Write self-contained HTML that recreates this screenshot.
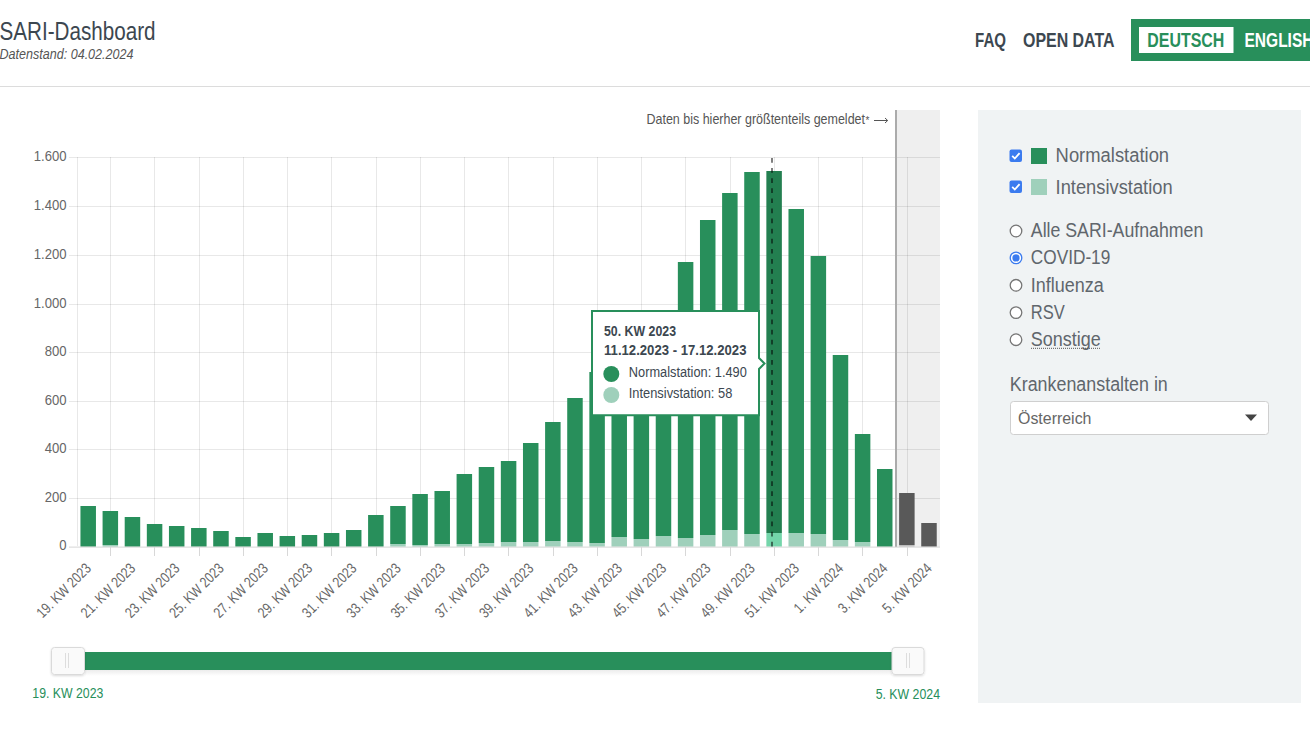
<!DOCTYPE html>
<html><head><meta charset="utf-8"><title>SARI-Dashboard</title>
<style>
html,body{margin:0;padding:0;background:#fff;width:1310px;height:737px;overflow:hidden}
svg{display:block}
text{font-family:"Liberation Sans",sans-serif}
</style></head><body>
<svg width="1310" height="737" viewBox="0 0 1310 737">
<defs><linearGradient id="bsh" x1="0" y1="0" x2="0" y2="1"><stop offset="0" stop-color="#ececec"/><stop offset="1" stop-color="#ffffff"/></linearGradient><filter id="sh" x="-30%" y="-30%" width="160%" height="160%"><feDropShadow dx="0" dy="1" stdDeviation="1" flood-color="#000" flood-opacity="0.15"/></filter></defs>
<text x="-0.50" y="39.60" font-size="25.73" fill="#3c4750" font-weight="normal" font-style="normal" text-anchor="start" textLength="156.00" lengthAdjust="spacingAndGlyphs" >SARI-Dashboard</text>
<text x="-0.50" y="59.00" font-size="14.68" fill="#555" font-weight="normal" font-style="italic" text-anchor="start" textLength="134.00" lengthAdjust="spacingAndGlyphs" >Datenstand: 04.02.2024</text>
<rect x="0" y="86" width="1310" height="1" fill="#dcdcdc" />
<text x="975.00" y="46.60" font-size="19.77" fill="#3c4750" font-weight="bold" font-style="normal" text-anchor="start" textLength="31.00" lengthAdjust="spacingAndGlyphs" >FAQ</text>
<text x="1023.00" y="46.60" font-size="19.77" fill="#3c4750" font-weight="bold" font-style="normal" text-anchor="start" textLength="91.50" lengthAdjust="spacingAndGlyphs" >OPEN DATA</text>
<rect x="1131" y="19" width="179" height="42" fill="#288f5b" />
<rect x="1139" y="27" width="94.5" height="26" fill="#fff" />
<text x="1147.30" y="46.50" font-size="19.77" fill="#288f5b" font-weight="bold" font-style="normal" text-anchor="start" textLength="77.00" lengthAdjust="spacingAndGlyphs" >DEUTSCH</text>
<text x="1244.50" y="46.50" font-size="19.77" fill="#fff" font-weight="bold" font-style="normal" text-anchor="start" textLength="69.00" lengthAdjust="spacingAndGlyphs" >ENGLISH</text>
<rect x="896" y="110" width="44" height="437" fill="#efefef" />
<rect x="69" y="157" width="871" height="1" fill="rgba(0,0,0,0.09)" />
<rect x="69" y="206" width="871" height="1" fill="rgba(0,0,0,0.09)" />
<rect x="69" y="255" width="871" height="1" fill="rgba(0,0,0,0.09)" />
<rect x="69" y="304" width="871" height="1" fill="rgba(0,0,0,0.09)" />
<rect x="69" y="352" width="871" height="1" fill="rgba(0,0,0,0.09)" />
<rect x="69" y="401" width="871" height="1" fill="rgba(0,0,0,0.09)" />
<rect x="69" y="449" width="871" height="1" fill="rgba(0,0,0,0.09)" />
<rect x="69" y="498" width="871" height="1" fill="rgba(0,0,0,0.09)" />
<rect x="77" y="157" width="1" height="389" fill="rgba(0,0,0,0.09)" />
<rect x="110" y="157" width="1" height="389" fill="rgba(0,0,0,0.09)" />
<rect x="110" y="547" width="1" height="9" fill="#d8d8d8" />
<rect x="154" y="157" width="1" height="389" fill="rgba(0,0,0,0.09)" />
<rect x="154" y="547" width="1" height="9" fill="#d8d8d8" />
<rect x="199" y="157" width="1" height="389" fill="rgba(0,0,0,0.09)" />
<rect x="199" y="547" width="1" height="9" fill="#d8d8d8" />
<rect x="243" y="157" width="1" height="389" fill="rgba(0,0,0,0.09)" />
<rect x="243" y="547" width="1" height="9" fill="#d8d8d8" />
<rect x="287" y="157" width="1" height="389" fill="rgba(0,0,0,0.09)" />
<rect x="287" y="547" width="1" height="9" fill="#d8d8d8" />
<rect x="331" y="157" width="1" height="389" fill="rgba(0,0,0,0.09)" />
<rect x="331" y="547" width="1" height="9" fill="#d8d8d8" />
<rect x="376" y="157" width="1" height="389" fill="rgba(0,0,0,0.09)" />
<rect x="376" y="547" width="1" height="9" fill="#d8d8d8" />
<rect x="420" y="157" width="1" height="389" fill="rgba(0,0,0,0.09)" />
<rect x="420" y="547" width="1" height="9" fill="#d8d8d8" />
<rect x="464" y="157" width="1" height="389" fill="rgba(0,0,0,0.09)" />
<rect x="464" y="547" width="1" height="9" fill="#d8d8d8" />
<rect x="508" y="157" width="1" height="389" fill="rgba(0,0,0,0.09)" />
<rect x="508" y="547" width="1" height="9" fill="#d8d8d8" />
<rect x="553" y="157" width="1" height="389" fill="rgba(0,0,0,0.09)" />
<rect x="553" y="547" width="1" height="9" fill="#d8d8d8" />
<rect x="597" y="157" width="1" height="389" fill="rgba(0,0,0,0.09)" />
<rect x="597" y="547" width="1" height="9" fill="#d8d8d8" />
<rect x="641" y="157" width="1" height="389" fill="rgba(0,0,0,0.09)" />
<rect x="641" y="547" width="1" height="9" fill="#d8d8d8" />
<rect x="685" y="157" width="1" height="389" fill="rgba(0,0,0,0.09)" />
<rect x="685" y="547" width="1" height="9" fill="#d8d8d8" />
<rect x="730" y="157" width="1" height="389" fill="rgba(0,0,0,0.09)" />
<rect x="730" y="547" width="1" height="9" fill="#d8d8d8" />
<rect x="774" y="157" width="1" height="389" fill="rgba(0,0,0,0.09)" />
<rect x="774" y="547" width="1" height="9" fill="#d8d8d8" />
<rect x="818" y="157" width="1" height="389" fill="rgba(0,0,0,0.09)" />
<rect x="818" y="547" width="1" height="9" fill="#d8d8d8" />
<rect x="862" y="157" width="1" height="389" fill="rgba(0,0,0,0.09)" />
<rect x="862" y="547" width="1" height="9" fill="#d8d8d8" />
<rect x="907" y="157" width="1" height="389" fill="rgba(0,0,0,0.09)" />
<rect x="907" y="547" width="1" height="9" fill="#d8d8d8" />
<rect x="895" y="110" width="2" height="437" fill="#ababab" />
<rect x="80.45" y="506" width="15.5" height="40.700000000000045" fill="#288f5b" />
<rect x="102.58" y="511" width="15.5" height="34" fill="#288f5b" />
<rect x="102.58" y="545" width="15.5" height="1.7000000000000455" fill="#9fd0bb" />
<rect x="124.7" y="517" width="15.5" height="29.700000000000045" fill="#288f5b" />
<rect x="146.83" y="524" width="15.5" height="22.700000000000045" fill="#288f5b" />
<rect x="168.95" y="526" width="15.5" height="20.700000000000045" fill="#288f5b" />
<rect x="191.08" y="528" width="15.5" height="18.700000000000045" fill="#288f5b" />
<rect x="213.21" y="531" width="15.5" height="15.700000000000045" fill="#288f5b" />
<rect x="235.33" y="537" width="15.5" height="9.700000000000045" fill="#288f5b" />
<rect x="257.46" y="533" width="15.5" height="13.700000000000045" fill="#288f5b" />
<rect x="279.58" y="536" width="15.5" height="10.700000000000045" fill="#288f5b" />
<rect x="301.71" y="535" width="15.5" height="11.700000000000045" fill="#288f5b" />
<rect x="323.84" y="533" width="15.5" height="13.700000000000045" fill="#288f5b" />
<rect x="345.96" y="530" width="15.5" height="16.700000000000045" fill="#288f5b" />
<rect x="368.09" y="515" width="15.5" height="31.700000000000045" fill="#288f5b" />
<rect x="390.21" y="506" width="15.5" height="38" fill="#288f5b" />
<rect x="390.21" y="544" width="15.5" height="2.7000000000000455" fill="#9fd0bb" />
<rect x="412.34" y="494" width="15.5" height="51" fill="#288f5b" />
<rect x="412.34" y="545" width="15.5" height="1.7000000000000455" fill="#9fd0bb" />
<rect x="434.47" y="491" width="15.5" height="53" fill="#288f5b" />
<rect x="434.47" y="544" width="15.5" height="2.7000000000000455" fill="#9fd0bb" />
<rect x="456.59" y="474" width="15.5" height="70" fill="#288f5b" />
<rect x="456.59" y="544" width="15.5" height="2.7000000000000455" fill="#9fd0bb" />
<rect x="478.72" y="467" width="15.5" height="76" fill="#288f5b" />
<rect x="478.72" y="543" width="15.5" height="3.7000000000000455" fill="#9fd0bb" />
<rect x="500.84" y="461" width="15.5" height="81" fill="#288f5b" />
<rect x="500.84" y="542" width="15.5" height="4.7000000000000455" fill="#9fd0bb" />
<rect x="522.97" y="443" width="15.5" height="99" fill="#288f5b" />
<rect x="522.97" y="542" width="15.5" height="4.7000000000000455" fill="#9fd0bb" />
<rect x="545.1" y="422" width="15.5" height="119" fill="#288f5b" />
<rect x="545.1" y="541" width="15.5" height="5.7000000000000455" fill="#9fd0bb" />
<rect x="567.22" y="398" width="15.5" height="144" fill="#288f5b" />
<rect x="567.22" y="542" width="15.5" height="4.7000000000000455" fill="#9fd0bb" />
<rect x="589.35" y="372" width="15.5" height="171" fill="#288f5b" />
<rect x="589.35" y="543" width="15.5" height="3.7000000000000455" fill="#9fd0bb" />
<rect x="611.47" y="350" width="15.5" height="187" fill="#288f5b" />
<rect x="611.47" y="537" width="15.5" height="9.700000000000045" fill="#9fd0bb" />
<rect x="633.6" y="330" width="15.5" height="209" fill="#288f5b" />
<rect x="633.6" y="539" width="15.5" height="7.7000000000000455" fill="#9fd0bb" />
<rect x="655.73" y="320" width="15.5" height="216" fill="#288f5b" />
<rect x="655.73" y="536" width="15.5" height="10.700000000000045" fill="#9fd0bb" />
<rect x="677.85" y="262" width="15.5" height="276" fill="#288f5b" />
<rect x="677.85" y="538" width="15.5" height="8.700000000000045" fill="#9fd0bb" />
<rect x="699.98" y="220" width="15.5" height="315" fill="#288f5b" />
<rect x="699.98" y="535" width="15.5" height="11.700000000000045" fill="#9fd0bb" />
<rect x="722.1" y="193" width="15.5" height="337" fill="#288f5b" />
<rect x="722.1" y="530" width="15.5" height="16.700000000000045" fill="#9fd0bb" />
<rect x="744.23" y="172" width="15.5" height="362" fill="#288f5b" />
<rect x="744.23" y="534" width="15.5" height="12.700000000000045" fill="#9fd0bb" />
<rect x="766.36" y="171" width="15.5" height="362" fill="#237f50" />
<rect x="766.36" y="533" width="15.5" height="13.700000000000045" fill="#74d5aa" />
<rect x="788.48" y="209" width="15.5" height="324" fill="#288f5b" />
<rect x="788.48" y="533" width="15.5" height="13.700000000000045" fill="#9fd0bb" />
<rect x="810.61" y="256" width="15.5" height="278" fill="#288f5b" />
<rect x="810.61" y="534" width="15.5" height="12.700000000000045" fill="#9fd0bb" />
<rect x="832.73" y="355" width="15.5" height="185" fill="#288f5b" />
<rect x="832.73" y="540" width="15.5" height="6.7000000000000455" fill="#9fd0bb" />
<rect x="854.86" y="434" width="15.5" height="108" fill="#288f5b" />
<rect x="854.86" y="542" width="15.5" height="4.7000000000000455" fill="#9fd0bb" />
<rect x="876.99" y="469" width="15.5" height="77.70000000000005" fill="#288f5b" />
<rect x="899.11" y="493" width="15.5" height="52" fill="#595959" />
<rect x="899.11" y="545" width="15.5" height="1.7000000000000455" fill="#bdbdbd" />
<rect x="921.24" y="523" width="15.5" height="23.700000000000045" fill="#595959" />
<rect x="69" y="546.6" width="871" height="1" fill="#d6d6d6" />
<line x1="772" y1="158" x2="772" y2="547" stroke="rgba(0,0,0,0.5)" stroke-width="2" stroke-dasharray="4.7,5.4"/>
<text x="66.50" y="549.70" font-size="14.97" fill="#666666" font-weight="normal" font-style="normal" text-anchor="end" textLength="7.29" lengthAdjust="spacingAndGlyphs" >0</text>
<text x="66.50" y="501.70" font-size="14.97" fill="#666666" font-weight="normal" font-style="normal" text-anchor="end" textLength="21.86" lengthAdjust="spacingAndGlyphs" >200</text>
<text x="66.50" y="452.70" font-size="14.97" fill="#666666" font-weight="normal" font-style="normal" text-anchor="end" textLength="21.86" lengthAdjust="spacingAndGlyphs" >400</text>
<text x="66.50" y="404.70" font-size="14.97" fill="#666666" font-weight="normal" font-style="normal" text-anchor="end" textLength="21.86" lengthAdjust="spacingAndGlyphs" >600</text>
<text x="66.50" y="355.70" font-size="14.97" fill="#666666" font-weight="normal" font-style="normal" text-anchor="end" textLength="21.86" lengthAdjust="spacingAndGlyphs" >800</text>
<text x="66.50" y="307.70" font-size="14.97" fill="#666666" font-weight="normal" font-style="normal" text-anchor="end" textLength="32.78" lengthAdjust="spacingAndGlyphs" >1.000</text>
<text x="66.50" y="258.70" font-size="14.97" fill="#666666" font-weight="normal" font-style="normal" text-anchor="end" textLength="32.78" lengthAdjust="spacingAndGlyphs" >1.200</text>
<text x="66.50" y="209.70" font-size="14.97" fill="#666666" font-weight="normal" font-style="normal" text-anchor="end" textLength="32.78" lengthAdjust="spacingAndGlyphs" >1.400</text>
<text x="66.50" y="160.70" font-size="14.97" fill="#666666" font-weight="normal" font-style="normal" text-anchor="end" textLength="32.78" lengthAdjust="spacingAndGlyphs" >1.600</text>
<text transform="translate(91.96,569.3) rotate(-45)" x="0" y="0" font-size="14.8" fill="#666666" text-anchor="end" textLength="69.80" lengthAdjust="spacingAndGlyphs">19. KW 2023</text>
<text transform="translate(136.22,569.3) rotate(-45)" x="0" y="0" font-size="14.8" fill="#666666" text-anchor="end" textLength="69.80" lengthAdjust="spacingAndGlyphs">21. KW 2023</text>
<text transform="translate(180.47,569.3) rotate(-45)" x="0" y="0" font-size="14.8" fill="#666666" text-anchor="end" textLength="69.80" lengthAdjust="spacingAndGlyphs">23. KW 2023</text>
<text transform="translate(224.72,569.3) rotate(-45)" x="0" y="0" font-size="14.8" fill="#666666" text-anchor="end" textLength="69.80" lengthAdjust="spacingAndGlyphs">25. KW 2023</text>
<text transform="translate(268.97,569.3) rotate(-45)" x="0" y="0" font-size="14.8" fill="#666666" text-anchor="end" textLength="69.80" lengthAdjust="spacingAndGlyphs">27. KW 2023</text>
<text transform="translate(313.22,569.3) rotate(-45)" x="0" y="0" font-size="14.8" fill="#666666" text-anchor="end" textLength="69.80" lengthAdjust="spacingAndGlyphs">29. KW 2023</text>
<text transform="translate(357.47,569.3) rotate(-45)" x="0" y="0" font-size="14.8" fill="#666666" text-anchor="end" textLength="69.80" lengthAdjust="spacingAndGlyphs">31. KW 2023</text>
<text transform="translate(401.73,569.3) rotate(-45)" x="0" y="0" font-size="14.8" fill="#666666" text-anchor="end" textLength="69.80" lengthAdjust="spacingAndGlyphs">33. KW 2023</text>
<text transform="translate(445.98,569.3) rotate(-45)" x="0" y="0" font-size="14.8" fill="#666666" text-anchor="end" textLength="69.80" lengthAdjust="spacingAndGlyphs">35. KW 2023</text>
<text transform="translate(490.23,569.3) rotate(-45)" x="0" y="0" font-size="14.8" fill="#666666" text-anchor="end" textLength="69.80" lengthAdjust="spacingAndGlyphs">37. KW 2023</text>
<text transform="translate(534.48,569.3) rotate(-45)" x="0" y="0" font-size="14.8" fill="#666666" text-anchor="end" textLength="69.80" lengthAdjust="spacingAndGlyphs">39. KW 2023</text>
<text transform="translate(578.74,569.3) rotate(-45)" x="0" y="0" font-size="14.8" fill="#666666" text-anchor="end" textLength="69.80" lengthAdjust="spacingAndGlyphs">41. KW 2023</text>
<text transform="translate(622.99,569.3) rotate(-45)" x="0" y="0" font-size="14.8" fill="#666666" text-anchor="end" textLength="69.80" lengthAdjust="spacingAndGlyphs">43. KW 2023</text>
<text transform="translate(667.24,569.3) rotate(-45)" x="0" y="0" font-size="14.8" fill="#666666" text-anchor="end" textLength="69.80" lengthAdjust="spacingAndGlyphs">45. KW 2023</text>
<text transform="translate(711.49,569.3) rotate(-45)" x="0" y="0" font-size="14.8" fill="#666666" text-anchor="end" textLength="69.80" lengthAdjust="spacingAndGlyphs">47. KW 2023</text>
<text transform="translate(755.74,569.3) rotate(-45)" x="0" y="0" font-size="14.8" fill="#666666" text-anchor="end" textLength="69.80" lengthAdjust="spacingAndGlyphs">49. KW 2023</text>
<text transform="translate(800.00,569.3) rotate(-45)" x="0" y="0" font-size="14.8" fill="#666666" text-anchor="end" textLength="69.80" lengthAdjust="spacingAndGlyphs">51. KW 2023</text>
<text transform="translate(844.25,569.3) rotate(-45)" x="0" y="0" font-size="14.8" fill="#666666" text-anchor="end" textLength="63.09" lengthAdjust="spacingAndGlyphs">1. KW 2024</text>
<text transform="translate(888.50,569.3) rotate(-45)" x="0" y="0" font-size="14.8" fill="#666666" text-anchor="end" textLength="63.09" lengthAdjust="spacingAndGlyphs">3. KW 2024</text>
<text transform="translate(932.75,569.3) rotate(-45)" x="0" y="0" font-size="14.8" fill="#666666" text-anchor="end" textLength="63.09" lengthAdjust="spacingAndGlyphs">5. KW 2024</text>
<text x="646.50" y="123.80" font-size="15.12" fill="#555" font-weight="normal" font-style="normal" text-anchor="start" textLength="218.50" lengthAdjust="spacingAndGlyphs" >Daten bis hierher größtenteils gemeldet</text>
<text x="865.5" y="124" font-size="10" fill="#555">*</text>
<path d="M874 120.5 H887.5 M885 118 L887.7 120.5 L885 123" fill="none" stroke="#555" stroke-width="1"/>
<path d="M592 311 H759 V358 L764.5 363.5 L759 369 V415.3 H592 Z" fill="#fff" stroke="#288f5b" stroke-width="2"/>
<text x="604.00" y="335.50" font-size="14.83" fill="#3c4750" font-weight="bold" font-style="normal" text-anchor="start" textLength="72.00" lengthAdjust="spacingAndGlyphs" >50. KW 2023</text>
<text x="604.00" y="354.90" font-size="14.83" fill="#3c4750" font-weight="bold" font-style="normal" text-anchor="start" textLength="142.50" lengthAdjust="spacingAndGlyphs" >11.12.2023 - 17.12.2023</text>
<circle cx="611.3" cy="374" r="8" fill="#288f5b"/>
<circle cx="611.3" cy="395" r="8" fill="#9fd0bb"/>
<text x="628.80" y="377.20" font-size="14.83" fill="#3c4750" font-weight="normal" font-style="normal" text-anchor="start" textLength="118.00" lengthAdjust="spacingAndGlyphs" >Normalstation: 1.490</text>
<text x="628.80" y="398.30" font-size="14.83" fill="#3c4750" font-weight="normal" font-style="normal" text-anchor="start" textLength="103.50" lengthAdjust="spacingAndGlyphs" >Intensivstation: 58</text>
<rect x="85" y="670" width="807" height="6" fill="url(#bsh)" />
<rect x="85" y="652" width="807" height="18" fill="#288f5b" />
<rect x="51.5" y="647.5" width="33" height="27" rx="3" fill="#fafafa" stroke="#dadada" filter="url(#sh)"/>
<rect x="892" y="647.5" width="32" height="27" rx="3" fill="#fafafa" stroke="#dadada" filter="url(#sh)"/>
<rect x="65" y="653" width="1" height="15" fill="#dddddd" />
<rect x="68" y="653" width="1" height="15" fill="#dddddd" />
<rect x="906" y="653" width="1" height="15" fill="#dddddd" />
<rect x="909" y="653" width="1" height="15" fill="#dddddd" />
<text x="32.30" y="698.40" font-size="14.68" fill="#288f5b" font-weight="normal" font-style="normal" text-anchor="start" textLength="71.00" lengthAdjust="spacingAndGlyphs" >19. KW 2023</text>
<text x="875.70" y="698.50" font-size="14.68" fill="#288f5b" font-weight="normal" font-style="normal" text-anchor="start" textLength="64.30" lengthAdjust="spacingAndGlyphs" >5. KW 2024</text>
<rect x="978" y="110" width="323" height="593" fill="#f0f3f4" />
<rect x="1009.5" y="149.5" width="12.5" height="12.5" rx="2" fill="#3b7bef"/>
<path d="M1012.2 155.8 L1014.8 158.5 L1019.6 153.1" fill="none" stroke="#fff" stroke-width="1.8"/>
<rect x="1009.5" y="180.5" width="12.5" height="12.5" rx="2" fill="#3b7bef"/>
<path d="M1012.2 186.8 L1014.8 189.5 L1019.6 184.1" fill="none" stroke="#fff" stroke-width="1.8"/>
<rect x="1031" y="148" width="16" height="16" fill="#288f5b" />
<rect x="1031" y="179" width="16" height="16" fill="#9fd0bb" />
<text x="1055.60" y="162.40" font-size="19.77" fill="#60666c" font-weight="normal" font-style="normal" text-anchor="start" textLength="113.50" lengthAdjust="spacingAndGlyphs" >Normalstation</text>
<text x="1055.60" y="193.60" font-size="19.77" fill="#60666c" font-weight="normal" font-style="normal" text-anchor="start" textLength="117.00" lengthAdjust="spacingAndGlyphs" >Intensivstation</text>
<circle cx="1016" cy="231" r="5.8" fill="#fff" stroke="#767676" stroke-width="1.3"/>
<text x="1030.80" y="237.00" font-size="19.77" fill="#60666c" font-weight="normal" font-style="normal" text-anchor="start" textLength="172.50" lengthAdjust="spacingAndGlyphs" >Alle SARI-Aufnahmen</text>
<circle cx="1016" cy="257.9" r="5.8" fill="#fff" stroke="#3b7bef" stroke-width="1.3"/>
<circle cx="1016" cy="257.9" r="3.6" fill="#3b7bef"/>
<text x="1030.80" y="264.40" font-size="19.77" fill="#60666c" font-weight="normal" font-style="normal" text-anchor="start" textLength="79.50" lengthAdjust="spacingAndGlyphs" >COVID-19</text>
<circle cx="1016" cy="285.3" r="5.8" fill="#fff" stroke="#767676" stroke-width="1.3"/>
<text x="1030.80" y="291.50" font-size="19.77" fill="#60666c" font-weight="normal" font-style="normal" text-anchor="start" textLength="73.00" lengthAdjust="spacingAndGlyphs" >Influenza</text>
<circle cx="1016" cy="312.6" r="5.8" fill="#fff" stroke="#767676" stroke-width="1.3"/>
<text x="1030.80" y="318.80" font-size="19.77" fill="#60666c" font-weight="normal" font-style="normal" text-anchor="start" textLength="34.00" lengthAdjust="spacingAndGlyphs" >RSV</text>
<circle cx="1016" cy="339.7" r="5.8" fill="#fff" stroke="#767676" stroke-width="1.3"/>
<text x="1030.80" y="346.00" font-size="19.77" fill="#60666c" font-weight="normal" font-style="normal" text-anchor="start" textLength="70.00" lengthAdjust="spacingAndGlyphs" >Sonstige</text>
<line x1="1031" y1="348.3" x2="1100" y2="348.3" stroke="#555" stroke-width="1" stroke-dasharray="1,1"/>
<text x="1009.80" y="390.70" font-size="19.77" fill="#60666c" font-weight="normal" font-style="normal" text-anchor="start" textLength="158.00" lengthAdjust="spacingAndGlyphs" >Krankenanstalten in</text>
<rect x="1010.5" y="401.5" width="258" height="33" rx="3" fill="#fff" stroke="#cfcfcf"/>
<text x="1018.00" y="423.80" font-size="16.57" fill="#666" font-weight="normal" font-style="normal" text-anchor="start" textLength="73.50" lengthAdjust="spacingAndGlyphs" >Österreich</text>
<path d="M1245 414.5 H1257 L1251 421 Z" fill="#444"/>
</svg>
</body></html>
